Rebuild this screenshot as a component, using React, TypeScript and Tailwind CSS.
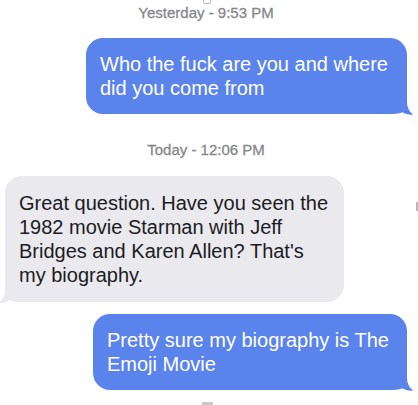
import React from 'react'

const font = { fontFamily: '"Liberation Sans", Arial, sans-serif' }

function Tail({ color, side }: { color: string; side: 'left' | 'right' }) {
  const pos = side === 'right' ? 'right-[-7px]' : 'left-[-7px] -scale-x-100'
  return (
    <svg
      className={`absolute bottom-[-1px] ${pos}`}
      width="23"
      height="22"
      viewBox="0 0 23 22"
    >
      <path
        d="M0 0 L16 0 L16 8 C16 14.5 18 18.5 22.5 21.6 C18 22 14 21 11.5 19.3 C9 20.6 6 21 2 21 L0 21 Z"
        fill={color}
      />
    </svg>
  )
}

function Stamp({ children }: { children: React.ReactNode }) {
  return (
    <div className="pr-[6px] text-center text-[15px] leading-[18px] text-[#86868b] [-webkit-text-stroke:0.3px_#86868b]">
      {children}
    </div>
  )
}

function Sent({ width, children }: { width: string; children: React.ReactNode }) {
  return (
    <div className="flex justify-end pr-[11px]">
      <div className={`relative ${width} rounded-[17px] bg-[#5b83ec] p-[14px] text-[20px] leading-[24px] text-white`}>
        {children}
        <Tail color="#5b83ec" side="right" />
      </div>
    </div>
  )
}

function Received({ children }: { children: React.ReactNode }) {
  return (
    <div className="flex justify-start pl-[5px]">
      <div className="relative w-[339px] rounded-[17px] bg-[#e9e9ee] px-[14px] py-[15px] text-[20px] leading-[24px] text-[#1c1c1e]">
        {children}
        <Tail color="#e9e9ee" side="left" />
      </div>
    </div>
  )
}

export default function App() {
  return (
    <div className="relative flex h-[405px] w-[418px] flex-col overflow-hidden bg-white pt-[4px]" style={font}>
      {/* fragments of neighbouring items cut by the screenshot edges */}
      <div className="absolute left-[203px] top-[-4px] h-[8px] w-[8px] rounded-[2px] border border-[#b8b8bd]" />
      <div className="absolute right-0 top-[202px] h-[9px] w-[2px] bg-[#b8b8bd]" />
      <div className="absolute left-[202px] top-[402px] h-[3px] w-[11px] bg-[#c8c8cc]" />

      <Stamp>Yesterday - 9:53 PM</Stamp>

      <div className="mt-[16px]">
        <Sent width="w-[321px]">Who the fuck are you and where did you come from</Sent>
      </div>

      <div className="mt-[27px]">
        <Stamp>Today - 12:06 PM</Stamp>
      </div>

      <div className="mt-[17px]">
        <Received>
          Great question. Have you seen the 1982 movie Starman with Jeff Bridges and Karen Allen? That's my biography.
        </Received>
      </div>

      <div className="mt-[12px]">
        <Sent width="w-[314px]">Pretty sure my biography is The Emoji Movie</Sent>
      </div>
    </div>
  )
}
